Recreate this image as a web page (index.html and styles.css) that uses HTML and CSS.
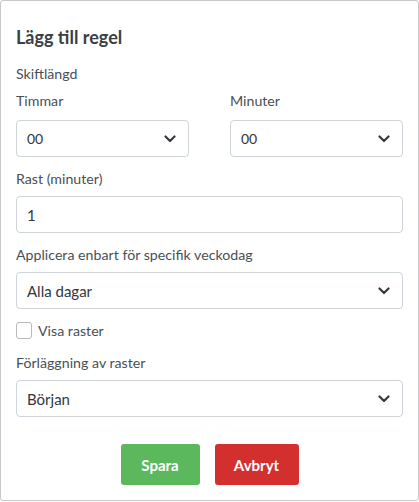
FILE: index.html
```html
<!DOCTYPE html>
<html lang="sv">
<head>
<meta charset="utf-8">
<link rel="stylesheet" href="styles.css">
</head>
<body>
<div class="modal">
  <h2 class="title">Lägg till regel</h2>
  <div class="section">Skiftlängd</div>
  <div class="row">
    <div class="col">
      <label class="label first">Timmar</label>
      <div class="select"><span>00</span><svg class="chev" viewBox="0 0 12 8" width="12" height="8"><path d="M1.5 1.5 L6 6 L10.5 1.5" fill="none" stroke="#343a40" stroke-width="2.2" stroke-linecap="round" stroke-linejoin="round"/></svg></div>
    </div>
    <div class="col">
      <label class="label first">Minuter</label>
      <div class="select"><span>00</span><svg class="chev" viewBox="0 0 12 8" width="12" height="8"><path d="M1.5 1.5 L6 6 L10.5 1.5" fill="none" stroke="#343a40" stroke-width="2.2" stroke-linecap="round" stroke-linejoin="round"/></svg></div>
    </div>
  </div>
  <label class="label">Rast (minuter)</label>
  <div class="input"><span>1</span></div>
  <label class="label">Applicera enbart för specifik veckodag</label>
  <div class="select big"><span>Alla dagar</span><svg class="chev" viewBox="0 0 12 8" width="12" height="8"><path d="M1.5 1.5 L6 6 L10.5 1.5" fill="none" stroke="#343a40" stroke-width="2.2" stroke-linecap="round" stroke-linejoin="round"/></svg></div>
  <div class="check"><span class="box"></span><span>Visa raster</span></div>
  <label class="label after-check">Förläggning av raster</label>
  <div class="select big"><span>Början</span><svg class="chev" viewBox="0 0 12 8" width="12" height="8"><path d="M1.5 1.5 L6 6 L10.5 1.5" fill="none" stroke="#343a40" stroke-width="2.2" stroke-linecap="round" stroke-linejoin="round"/></svg></div>
  <div class="actions">
    <button class="btn save">Spara</button>
    <button class="btn cancel">Avbryt</button>
  </div>
</div>
</body>
</html>
```
FILE: styles.css
```css
html, body { margin: 0; padding: 0; background: #fff; }
body { font-family: "Lato", "Open Sans", sans-serif; color: #4a4f55; }
.modal {
  box-sizing: border-box;
  width: 419px;
  height: 501px;
  border: 1px solid #c8c8c8;
  border-radius: 3px;
  padding: 25px 15px 0 15px;
  display: flex;
  flex-direction: column;
}
.title { margin: 0; font-size: 18px; font-weight: 700; color: #3a3f44; line-height: 22px; }
.section { margin-top: 17px; font-size: 14.2px; line-height: 18px; }
.label { display: block; font-size: 14.2px; line-height: 18px; margin-top: 13px; margin-bottom: 8px; }
.label.first { margin-top: 9px; margin-bottom: 10px; }
.label.after-check { margin-top: 15px; }
.row { display: flex; gap: 41px; }
.col { flex: 1; }
.select, .input {
  box-sizing: border-box;
  height: 37px;
  flex: none;
  border: 1px solid #ced4da;
  border-radius: 4px;
  display: flex;
  align-items: center;
  justify-content: space-between;
  padding: 0 12px 0 10px;
  font-size: 14px;
  color: #33373b;
}
.select.big, .input { font-size: 15px; }
.chev { display: block; }
.check { display: flex; align-items: center; gap: 6px; margin-top: 13px; height: 17px; font-size: 14.2px; line-height: 18px; }
.box { width: 16px; height: 17px; border: 1px solid #b8b8b8; border-radius: 3px; box-sizing: border-box; display: inline-block; }
.actions { display: flex; justify-content: center; gap: 15px; margin-top: 27px; }
.btn {
  border: none;
  border-radius: 3px;
  height: 41px;
  font-family: inherit;
  font-weight: 700;
  font-size: 15px;
  color: #fff;
  padding: 0;
}
.save { background: #5cb85c; width: 79px; }
.cancel { background: #d32f2f; width: 84px; }
```
